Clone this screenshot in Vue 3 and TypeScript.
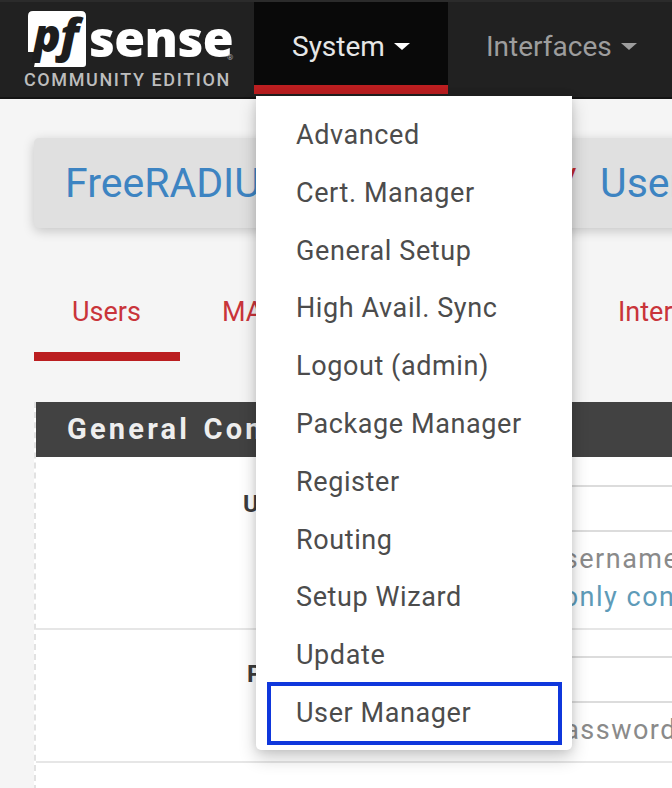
<script setup lang="ts">
const menuItems: string[] = [
  'Advanced',
  'Cert. Manager',
  'General Setup',
  'High Avail. Sync',
  'Logout (admin)',
  'Package Manager',
  'Register',
  'Routing',
  'Setup Wizard',
  'Update',
  'User Manager',
]
const tabs: { label: string; cls: string }[] = [
  { label: 'Users', cls: 'tab-active' },
  { label: 'MACs', cls: 'tab-macs' },
  { label: 'NAS / Clients', cls: 'tab-nas' },
  { label: 'Interfaces', cls: 'tab-if' },
]
</script>

<template>
  <div class="page">
    <header class="navbar">
      <div class="logo">
        <svg class="logo-svg" width="220" height="90" viewBox="0 0 220 90">
          <path d="M4 10 Q4 5 9 5 L57 5 Q62 5 62 10 L62 58 Q62 61 59 61 L10 61 L13 46 L4 46 Z" fill="#fff" />
          <text x="9" y="46" class="logo-pf">pf</text>
          <text x="65" y="51" class="logo-sense">sense</text>
          <text x="203" y="54" class="logo-reg">®</text>
          <text x="0" y="80" class="logo-ce">COMMUNITY EDITION</text>
        </svg>
      </div>
      <nav class="nav">
        <div class="nav-item nav-open">System <span class="caret"></span></div>
        <div class="nav-item">Interfaces <span class="caret"></span></div>
      </nav>
    </header>

    <ul class="menu">
      <li v-for="item in menuItems" :key="item" class="menu-item">{{ item }}</li>
      <li class="menu-mark"></li>
    </ul>

    <main class="content">
      <div class="title">
        <span class="crumb">FreeRADIUS</span>
        <span class="slash">/</span>
        <span class="crumb">Users</span>
      </div>

      <div class="tabs">
        <div v-for="t in tabs" :key="t.label" class="tab" :class="t.cls">{{ t.label }}</div>
      </div>

      <section class="panel">
        <h2 class="panel-head">General Configuration</h2>
        <div class="row row-user">
          <div class="label">Username</div>
          <div class="field">
            <div class="input"></div>
            <p class="help">Enter new username</p>
            <p class="help help-link">Name must only contain</p>
          </div>
        </div>
        <div class="row row-pass">
          <div class="label">Password</div>
          <div class="field">
            <div class="input"></div>
            <p class="help">Enter new password</p>
          </div>
        </div>
      </section>
    </main>
  </div>
</template>

<style>
html,
body {
  margin: 0;
  overflow: hidden;
  background: #f5f5f5;
}
</style>

<style scoped>
.page {
  position: relative;
  width: 672px;
  height: 788px;
  overflow: hidden;
  background: #f5f5f5;
  font-family: Roboto, "Liberation Sans", sans-serif;
}
.navbar {
  display: flex;
  height: 99px;
  background: #212121;
  border-top: 2px solid #2b2b2b;
  border-bottom: 2px solid #141414;
  box-sizing: border-box;
}
.logo {
  width: 254px;
  flex: none;
  padding-left: 24px;
  box-sizing: border-box;
}
.logo-svg {
  display: block;
  margin-top: 4px;
}
.logo-pf {
  font-family: "Open Sans", sans-serif;
  font-weight: 800;
  font-style: italic;
  font-size: 46px;
  letter-spacing: -1px;
  fill: #1d1d1d;
}
.logo-sense {
  font-family: "Open Sans", sans-serif;
  font-weight: 800;
  font-size: 50px;
  letter-spacing: -0.6px;
  fill: #fff;
}
.logo-reg {
  font-family: Roboto, sans-serif;
  font-size: 8px;
  fill: #aaa;
}
.logo-ce {
  font-family: Roboto, sans-serif;
  font-weight: 500;
  font-size: 18px;
  letter-spacing: 1.6px;
  fill: #bdbdbd;
}
.nav {
  display: flex;
  white-space: nowrap;
}
.nav-item {
  display: flex;
  align-items: center;
  gap: 9px;
  height: 88px;
  padding: 0 38px;
  font-size: 28px;
  color: #9d9d9d;
}
.nav-open {
  width: 194px;
  box-sizing: border-box;
  height: 92px;
  padding-top: 5px;
  background: #090909;
  color: #e6e6e6;
  border-bottom: 9px solid #bb1e20;
}
.caret {
  width: 0;
  height: 0;
  border-left: 8px solid transparent;
  border-right: 8px solid transparent;
  border-top: 7px solid currentColor;
}
.nav-open .caret {
  color: #fff;
}
.menu {
  position: absolute;
  left: 256px;
  top: 96px;
  z-index: 5;
  width: 316px;
  height: 654px;
  box-sizing: border-box;
  margin: 0;
  padding: 11px 0 0;
  list-style: none;
  background: #fff;
  border-radius: 0 0 5px 5px;
  box-shadow: 0 8px 18px rgba(0, 0, 0, 0.2), 0 0 8px rgba(0, 0, 0, 0.1);
}
.menu-item {
  height: 57.8px;
  line-height: 57.8px;
  padding-left: 40px;
  font-size: 27px;
  letter-spacing: 0.6px;
  color: #4c4c4c;
  white-space: nowrap;
}
.menu-mark {
  position: absolute;
  left: 11px;
  top: 586px;
  width: 295px;
  height: 63px;
  box-sizing: border-box;
  border: 4px solid #0f37dc;
}
.content {
  padding: 39px 0 0 34px;
}
.title {
  display: flex;
  align-items: center;
  height: 90px;
  width: 700px;
  padding-left: 31px;
  box-sizing: border-box;
  background: #e0e0e0;
  border-radius: 5px 0 0 5px;
  box-shadow: 0 3px 12px rgba(0, 0, 0, 0.2);
  font-size: 41px;
  color: #3d84c2;
  white-space: nowrap;
}
.slash {
  margin-left: 275px;
  margin-right: 23px;
  color: #c0282c;
}
.tabs {
  display: flex;
  gap: 4px;
  margin-top: 60px;
  width: 800px;
}
.tab {
  flex: none;
  height: 73px;
  padding: 0 38px;
  line-height: 48px;
  box-sizing: border-box;
  font-size: 27px;
  color: #c9343a;
}
.tab-active {
  width: 146px;
  border-bottom: 9px solid #bb1e20;
}
.tab-macs {
  width: 146px;
}
.tab-nas {
  width: 242px;
}
.panel {
  margin: 41px 0 0 0;
  width: 700px;
  min-height: 500px;
  background: #fff;
  border-left: 2px dashed #e2e2e2;
}
.panel-head {
  margin: 0;
  height: 55px;
  line-height: 54px;
  padding-left: 31px;
  background: #424242;
  color: #eeeeee;
  font-size: 29px;
  font-weight: 700;
  letter-spacing: 3.2px;
  word-spacing: 3px;
}
.row {
  display: flex;
  box-sizing: border-box;
  border-bottom: 2px solid #e6e6e6;
}
.row-user {
  height: 173px;
}
.row-pass {
  height: 133px;
}
.label {
  flex: none;
  width: 317px;
  text-align: right;
  padding-top: 33px;
  font-size: 24px;
  font-weight: 700;
  color: #3c3c3c;
  box-sizing: border-box;
}
.row-pass .label {
  padding-top: 30px;
}
.field {
  flex: 1;
  padding: 28px 0 0 48px;
}
.row-pass .field {
  padding-top: 26px;
}
.input {
  height: 43px;
  border-top: 2px solid #dcdcdc;
  border-bottom: 2px solid #dcdcdc;
  margin-bottom: 8px;
}
.help {
  margin: 0;
  padding-left: 6px;
  line-height: 38px;
  font-size: 27px;
  letter-spacing: 1.5px;
  color: #8a8a8a;
  white-space: nowrap;
}
.help-link {
  padding-left: 0;
  color: #5e9bb8;
}
</style>
